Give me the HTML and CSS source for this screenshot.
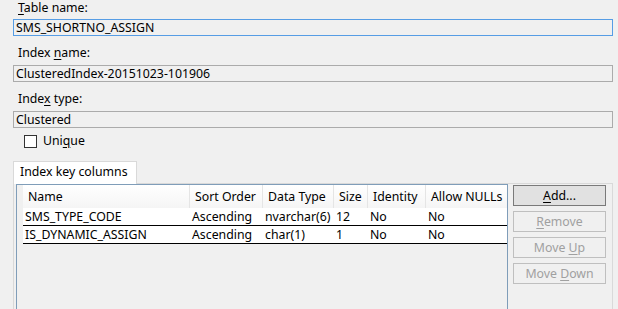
FILE: index.html
```html
<!DOCTYPE html>
<html>
  <head>
    <meta charset="UTF-8" />
    <title>Index Properties</title>
    <link rel="stylesheet" href="styles.css">
  </head>
  <body>
    <div class="dialog">
      <div class="field first">
        <div class="field-label"><u>T</u>able name:</div>
        <div class="field-box focused">SMS_SHORTNO_ASSIGN</div>
      </div>
      <div class="field">
        <div class="field-label">Index <u>n</u>ame:</div>
        <div class="field-box">ClusteredIndex-20151023-101906</div>
      </div>
      <div class="field last">
        <div class="field-label">Inde<u>x</u> type:</div>
        <div class="field-box">Clustered</div>
      </div>
      <div class="check-row">
        <span class="checkbox"></span>
        <span>Uni<u>q</u>ue</span>
      </div>

      <!-- tab control with the key column grid -->
      <div class="tab-strip">
        <div class="tab">Index key columns</div>
        <div class="tab-filler"></div>
      </div>
      <div class="tab-page">
        <div class="grid">
          <div class="grid-row header">
            <div class="row-head"></div>
            <div class="cell">Name</div>
            <div class="cell">Sort Order</div>
            <div class="cell">Data Type</div>
            <div class="cell">Size</div>
            <div class="cell">Identity</div>
            <div class="cell">Allow NULLs</div>
          </div>
          <div class="grid-row">
            <div class="row-head"></div>
            <div class="cell">SMS_TYPE_CODE</div>
            <div class="cell">Ascending</div>
            <div class="cell">nvarchar(6)</div>
            <div class="cell">12</div>
            <div class="cell">No</div>
            <div class="cell">No</div>
          </div>
          <div class="grid-row">
            <div class="row-head"></div>
            <div class="cell">IS_DYNAMIC_ASSIGN</div>
            <div class="cell">Ascending</div>
            <div class="cell">char(1)</div>
            <div class="cell">1</div>
            <div class="cell">No</div>
            <div class="cell">No</div>
          </div>
        </div>
        <div class="buttons">
          <button class="btn default"><u>A</u>dd...</button>
          <button class="btn" disabled><u>R</u>emove</button>
          <button class="btn" disabled>Move <u>U</u>p</button>
          <button class="btn" disabled>Move <u>D</u>own</button>
        </div>
      </div>
    </div>
  </body>
</html>
```

FILE: styles.css
```css
body, html {
    margin: 0;
    padding: 0;
    background-color: #f0f0f0;
    font-family: "Noto Sans", Arial, sans-serif;
    font-size: 12.3px;
    color: #000;
}

.dialog {
    padding: 1px 5px 0 13px;
    overflow: hidden;
    height: 309px;
    box-sizing: border-box;
}

u {
    text-decoration-thickness: 1px;
    text-underline-offset: 2px;
}

.field {
    margin-bottom: 10px;
}

.field.last {
    margin-bottom: 6px;
}

.field-label {
    padding-left: 5px;
    line-height: 13px;
    margin-bottom: 6px;
}

.field.first .field-label {
    margin-bottom: 5px;
}

.field-box {
    height: 17px;
    box-sizing: border-box;
    border: 1px solid #ababab;
    padding-left: 2px;
    line-height: 15px;
    white-space: nowrap;
}

.field-box.focused {
    border-color: #569de5;
}

.check-row {
    display: flex;
    align-items: center;
    gap: 6px;
    padding-left: 11px;
    height: 14px;
    line-height: 14px;
}

.checkbox {
    width: 13px;
    height: 13px;
    box-sizing: border-box;
    border: 1px solid #333;
    background-color: #fff;
}

.tab-strip {
    display: flex;
    margin-top: 13px;
    height: 23px;
}

.tab {
    width: 124px;
    box-sizing: border-box;
    border: 1px solid #d9d9d9;
    border-bottom: none;
    background-color: #fff;
    padding-left: 6px;
    line-height: 20px;
}

.tab-filler {
    flex: 1;
    border-bottom: 1px solid #d9d9d9;
}

.tab-page {
    display: flex;
    gap: 5px;
    border: 1px solid #d9d9d9;
    border-top: none;
    padding: 0 6px 0 2px;
    height: 140px;
}

.grid {
    width: 492px;
    box-sizing: border-box;
    border: 1px solid #7f9db9;
    border-bottom: none;
    background-color: #f0f0f0;
}

.grid-row {
    display: grid;
    grid-template-columns: 6px 167px 73px 71px 34px 58px 1fr;
    height: 18px;
    line-height: 16px;
}

.grid-row .cell {
    background-color: #fff;
    border-bottom: 1px solid #000;
    padding: 1px 0 0 2px;
    white-space: nowrap;
    overflow: hidden;
}

.row-head {
    background-color: #f0f0f0;
}

.grid-row.header {
    height: 23px;
    line-height: 20px;
}

.grid-row.header .cell {
    background: linear-gradient(#ffffff, #f5f5f5);
    border-bottom: none;
    border-right: 1px solid #e5e5e5;
    padding: 2px 0 0 5px;
}

.grid-row.header .cell:last-child {
    border-right: none;
}

.buttons {
    display: flex;
    flex-direction: column;
    gap: 5px;
    margin-top: 1px;
    width: 93px;
}

.btn {
    height: 21px;
    box-sizing: border-box;
    border: 1px solid #bfbfbf;
    background-color: #f0f0f0;
    color: #a0a0a0;
    font-family: "Noto Sans", Arial, sans-serif;
    font-size: 12.3px;
    line-height: 17px;
    padding: 0;
}

.btn.default {
    border-color: #7a7a7a;
    background-color: #e1e1e1;
    color: #000;
}
```
